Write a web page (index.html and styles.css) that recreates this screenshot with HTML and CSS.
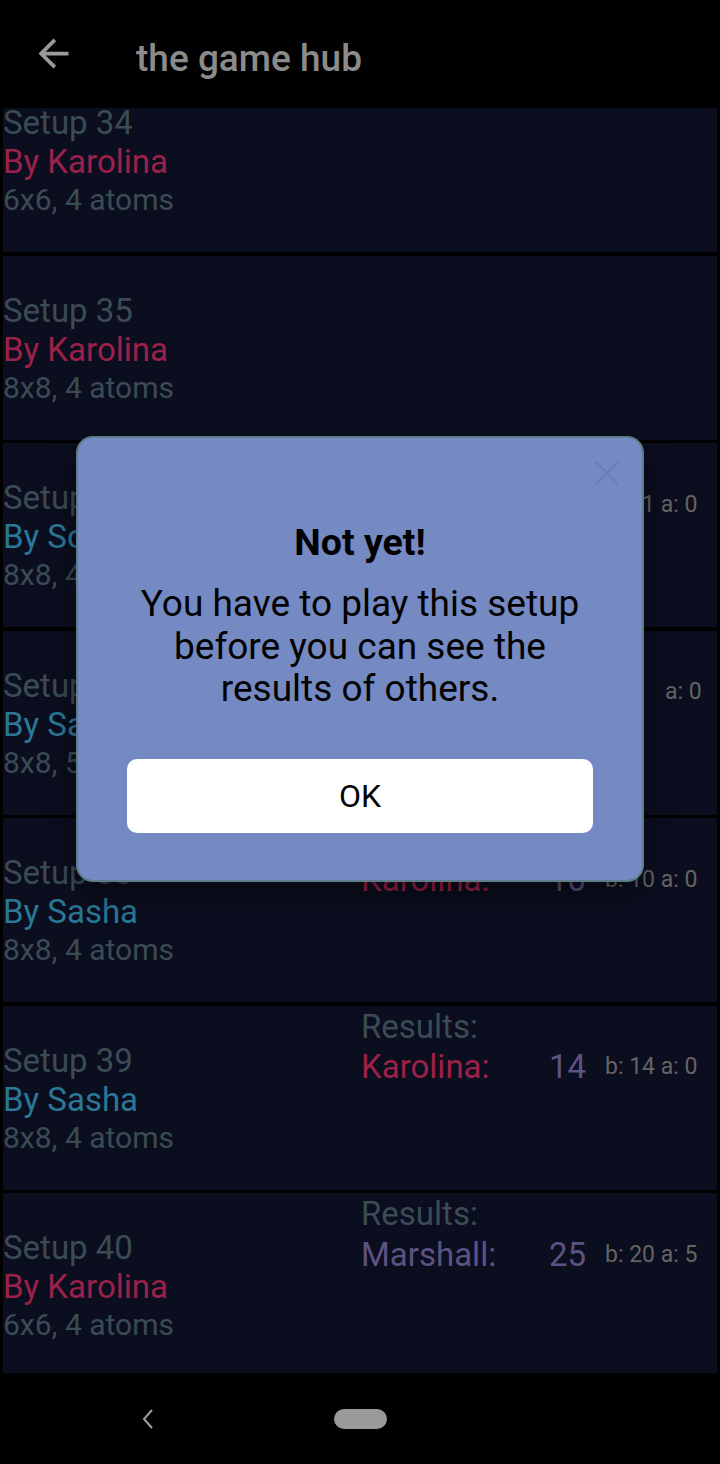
FILE: index.html
```html
<!DOCTYPE html>
<html>
<head>
<meta charset="utf-8">
<link rel="stylesheet" href="styles.css">
</head>
<body>
<div class="screen">
  <header class="appbar">
    <svg class="back" viewBox="0 0 24 24"><path d="M20 11H7.83l5.59-5.59L12 4l-8 8 8 8 1.41-1.41L7.83 13H20v-2z"/></svg>
    <h1 class="title">the game hub</h1>
  </header>
  <main class="list">
    <div class="row first">
      <div class="info"><div class="setup">Setup 34</div><div class="by red">By Karolina</div><div class="size">6x6, 4 atoms</div></div>
      <div class="results"></div>
    </div>
    <div class="row">
      <div class="info"><div class="setup">Setup 35</div><div class="by red">By Karolina</div><div class="size">8x8, 4 atoms</div></div>
      <div class="results"></div>
    </div>
    <div class="row">
      <div class="info"><div class="setup">Setup 36</div><div class="by blue">By Sophie</div><div class="size">8x8, 4 atoms</div></div>
      <div class="results"><div class="label">Results:</div><div class="line"><span class="name red">Karolina:</span><span class="score">11</span><span class="detail">b: 11 a: 0</span></div></div>
    </div>
    <div class="row">
      <div class="info"><div class="setup">Setup 37</div><div class="by blue">By Sasha</div><div class="size">8x8, 5 atoms</div></div>
      <div class="results"><div class="label">Results:</div><div class="line"><span class="name red">Karolina:</span><span class="score">9</span><span class="detail">b: 9&nbsp;&nbsp;&nbsp; a: 0</span></div></div>
    </div>
    <div class="row">
      <div class="info"><div class="setup">Setup 38</div><div class="by blue">By Sasha</div><div class="size">8x8, 4 atoms</div></div>
      <div class="results"><div class="label">Results:</div><div class="line"><span class="name red">Karolina:</span><span class="score">10</span><span class="detail">b: 10 a: 0</span></div></div>
    </div>
    <div class="row">
      <div class="info"><div class="setup">Setup 39</div><div class="by blue">By Sasha</div><div class="size">8x8, 4 atoms</div></div>
      <div class="results"><div class="label">Results:</div><div class="line"><span class="name red">Karolina:</span><span class="score">14</span><span class="detail">b: 14 a: 0</span></div></div>
    </div>
    <div class="row">
      <div class="info"><div class="setup">Setup 40</div><div class="by red">By Karolina</div><div class="size">6x6, 4 atoms</div></div>
      <div class="results"><div class="label">Results:</div><div class="line"><span class="name purple">Marshall:</span><span class="score">25</span><span class="detail">b: 20 a: 5</span></div></div>
    </div>
  </main>
  <footer class="navbar">
    <svg class="nav-back" viewBox="0 0 12 20"><path d="M10 1 L2 10 L10 19" fill="none" stroke="#a0a0a0" stroke-width="2"/></svg>
    <div class="pill"></div>
  </footer>

  <div class="scrim">
    <div class="dialog">
      <svg class="close" viewBox="0 0 26 26"><path d="M2 2 L24 24 M24 2 L2 24" stroke="#6a7eb0" stroke-width="2.2" fill="none"/></svg>
      <h2 class="d-title">Not yet!</h2>
      <p class="d-body">You have to play this setup before you can see the results of others.</p>
      <button class="ok">OK</button>
    </div>
  </div>
</div>
</body>
</html>
```

FILE: styles.css
```css
* { box-sizing: border-box; }
html, body { margin: 0; padding: 0; background: #000; }
body { font-family: Roboto, "Liberation Sans", sans-serif; }

.screen {
  position: relative;
  width: 720px;
  height: 1464px;
  display: flex;
  flex-direction: column;
  overflow: hidden;
  background: #000;
}

.appbar {
  height: 108px;
  flex: none;
  display: flex;
  align-items: center;
  padding-left: 31px;
  padding-top: 8px;
}
.back {
  width: 45px;
  height: 45px;
  fill: #9a9a9a;
  flex: none;
  margin-top: -10px;
}
.title {
  margin: 0 0 0 60px;
  font-size: 37px;
  font-weight: 500;
  color: #8b8b8b;
  line-height: 1;
}

.list {
  flex: 1;
  overflow: hidden;
  display: flex;
  flex-direction: column;
  gap: 3.5px;
}
.row {
  flex: none;
  height: 184px;
  margin: 0 3px;
  background: #0b0e1f;
  display: flex;
}
.row.first { margin-top: -40px; }

.info {
  width: 358px;
  display: flex;
  flex-direction: column;
  justify-content: center;
  color: #3b4b53;
}
.setup { font-size: 33px; line-height: 39px; }
.by { font-size: 33px; line-height: 40px; }
.size { font-size: 30px; line-height: 35px; }

.results {
  flex: 1;
  font-size: 33px;
  line-height: 40.5px;
  padding-top: 1px;
  color: #3b4b53;
}
.red { color: #9c2148; }
.blue { color: #2a7896; }
.purple { color: #5d5282; }

.line {
  display: flex;
  align-items: center;
}
.name { width: 188px; flex: none; }
.score { color: #5d5282; width: 37px; flex: none; }
.detail {
  margin-left: 19px;
  font-size: 23px;
  color: #646464;
}

.navbar {
  height: 91px;
  flex: none;
  display: flex;
  align-items: center;
  padding-top: 1px;
}
.nav-back {
  width: 12px;
  height: 20px;
  margin-left: 142px;
}
.pill {
  width: 53px;
  height: 20px;
  border-radius: 10px;
  background: #9a9a9a;
  margin-left: 180px;
}

.scrim {
  position: absolute;
  inset: 0;
  display: flex;
  justify-content: center;
  align-items: flex-start;
  padding-top: 436px;
}
.dialog {
  position: relative;
  width: 568px;
  background: #758ac3;
  border: 2px solid #5e7c89;
  border-radius: 17px;
  padding: 83px 49px 47px;
  box-shadow: 0 12px 30px rgba(0, 0, 0, 0.45);
  text-align: center;
  color: #000;
}
.close {
  position: absolute;
  top: 22px;
  right: 22px;
  width: 26px;
  height: 26px;
}
.d-title {
  margin: 0;
  font-size: 37.5px;
  font-weight: 700;
  line-height: 42px;
}
.d-body {
  width: 460px;
  margin: 20px auto 0;
  font-size: 37px;
  line-height: 42.5px;
}
.ok {
  display: block;
  width: 100%;
  height: 74px;
  margin-top: 48.5px;
  border: none;
  border-radius: 10px;
  background: #fff;
  font-family: Roboto, "Liberation Sans", sans-serif;
  font-size: 32px;
  color: #000;
}
```
